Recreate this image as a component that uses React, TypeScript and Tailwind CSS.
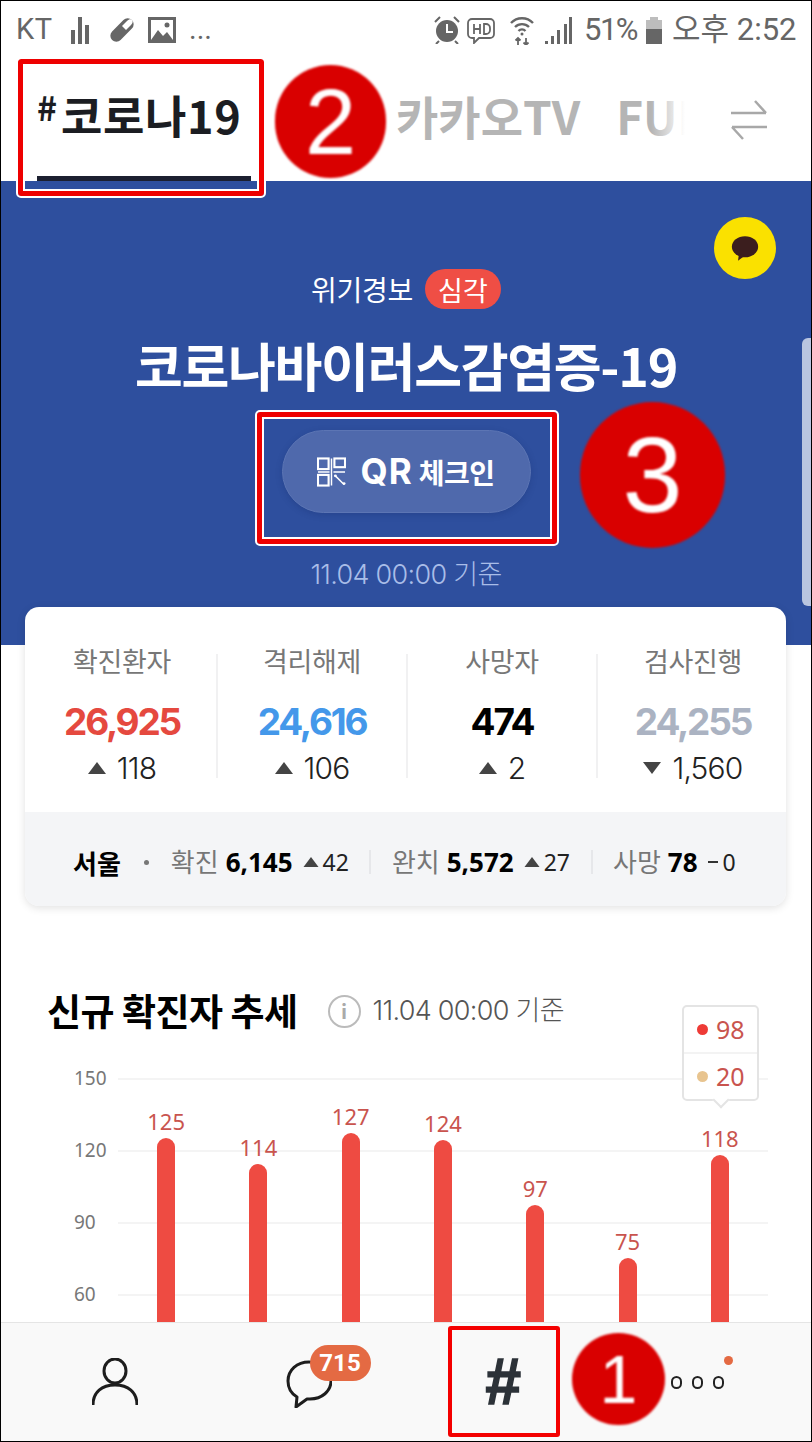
const stats = [
  { label: '확진환자', value: '26,925', color: 'text-[#e5493f]', delta: '118', up: true },
  { label: '격리해제', value: '24,616', color: 'text-[#4498ea]', delta: '106', up: true },
  { label: '사망자', value: '474', color: 'text-black', delta: '2', up: true },
  { label: '검사진행', value: '24,255', color: 'text-[#abb3c2]', delta: '1,560', up: false },
]

const bars = [125, 114, 127, 124, 97, 75, 118]

const axis = ['150', '120', '90', '60']

function Triangle({ up = true, small = false }: { up?: boolean; small?: boolean }) {
  return (
    <svg viewBox="0 0 18 12" className={small ? 'w-[16px] h-[10px]' : 'w-[18px] h-[12px]'}>
      <path d={up ? 'M9 0L18 12H0Z' : 'M9 12L18 0H0Z'} fill="#444" />
    </svg>
  )
}

function StatusBar() {
  return (
    <div className="h-[54px] shrink-0 flex items-center justify-between pl-[15px] pr-[14px] pt-[4px] text-[#666] font-['Roboto','Noto_Sans_CJK_KR',sans-serif] text-[31px]">
      <div className="flex items-center">
        <span className="w-[40px] tracking-[0.5px] text-[29px]">KT</span>
        <svg viewBox="0 0 20 27" className="ml-[15px] w-[20px] h-[27px]" fill="#666">
          <rect x="0" y="13" width="4" height="14" />
          <rect x="7" y="0" width="4" height="27" />
          <rect x="14" y="8" width="4" height="19" />
        </svg>
        <svg viewBox="0 0 28 28" className="ml-[17px] w-[28px] h-[28px]">
          <rect x="0" y="8" width="28" height="12" rx="6" transform="rotate(-45 14 14)" fill="#666" />
          <path d="M14 10l5-5c2-2 4-2 5-1s1 3-1 5l-5 5z" fill="#fff" />
        </svg>
        <svg viewBox="0 0 28 26" className="ml-[12px] w-[28px] h-[26px]">
          <path d="M0 0h28v26H0z" fill="#666" />
          <path d="M3 3h22v20H3z" fill="#fff" />
          <path d="M3 23l7-10 5 6 4-4 6 8z" fill="#666" />
          <circle cx="19" cy="8" r="2.5" fill="#666" />
        </svg>
        <span className="ml-[13px] w-[26px] text-[29px]">...</span>
      </div>
      <div className="flex items-center">
        <svg viewBox="0 0 26 28" className="w-[26px] h-[28px]">
          <circle cx="13" cy="15" r="11" fill="#666" />
          <path d="M13 8v8h6" stroke="#fff" strokeWidth="2" fill="none" />
          <path d="M1 6l5-5M25 6l-5-5M5 25l-3 3M21 25l3 3" stroke="#666" strokeWidth="2" />
        </svg>
        <svg viewBox="0 0 28 28" className="ml-[7px] w-[28px] h-[28px]">
          <path d="M5 3h18a4 4 0 014 4v11a4 4 0 01-4 4H12l-5 5v-5H5a4 4 0 01-4-4V7a4 4 0 014-4z" fill="none" stroke="#666" strokeWidth="1.8" />
          <path d="M7 8v10M13 8v10M7 13h6M17 8v10h2a4 4 0 004-4v-2a4 4 0 00-4-4z" fill="none" stroke="#666" strokeWidth="1.8" />
        </svg>
        <svg viewBox="0 0 24 30" className="ml-[15px] w-[24px] h-[30px]" fill="none" stroke="#666" strokeWidth="2.4">
          <path d="M1 8a15 15 0 0122 0M5 12a10 10 0 0114 0M8.500 16a5 5 0 017 0" />
          <circle cx="12" cy="19" r="1.500" fill="#666" stroke="none" />
          <path d="M8 30v-7M5.500 25.500L8 23l2.500 2.500M16 23v7M13.500 27.500L16 30l2.500-2.500" strokeWidth="1.800" />
        </svg>
        <svg viewBox="0 0 27 27" className="ml-[11px] w-[27px] h-[27px]" fill="#666">
          <path d="M0 27v-3h3v3zM6 27v-8h3v8zM12 27V13h3v14zM19 27V7h3v20zM24 27V0h3v27z" />
        </svg>
        <span className="ml-[12px] w-[53px] tracking-[-1.5px] whitespace-nowrap">51%</span>
        <svg viewBox="0 0 16 27" className="ml-[9px] w-[16px] h-[27px]">
          <path d="M4 0h8v3h4v24H0V3h4z" fill="#bdbdbd" />
          <rect x="0" y="12" width="16" height="15" fill="#666" />
        </svg>
        <span className="ml-[10px] w-[125px] whitespace-nowrap">오후 2:52</span>
      </div>
    </div>
  )
}

function Tabs() {
  return (
    <div className="relative h-[126px] shrink-0 flex items-center font-['Noto_Sans_CJK_KR',sans-serif] font-bold">
      <div className="relative ml-[36px] w-[214px] h-full flex items-center text-[#1b1d22]">
        <span className="text-[34px] -mt-[24px]">#</span>
        <span className="text-[45px] ml-[4px] tracking-[0.6px] -mt-[6px]">코로나19</span>
        <div className="absolute left-0 right-0 bottom-0 h-[5px] bg-[#1c2030]" />
      </div>
      <span className="ml-[145px] text-[46px] text-[#b5b5b5] whitespace-nowrap -mt-[6px]">카카오TV</span>
      <span className="ml-[36px] text-[46px] text-[#b5b5b5] whitespace-nowrap -mt-[6px]">FUN</span>
      <div className="absolute left-[650px] top-0 w-[160px] h-full bg-[linear-gradient(to_right,transparent,#fff_34px)]" />
      <svg viewBox="0 0 38 40" className="absolute left-[729px] top-[45px] w-[38px] h-[40px]" fill="none" stroke="#a8a8a8" strokeWidth="2.500">
        <path d="M1 13h35M25 1l11 12M37 27H2M13 39L2 27" />
      </svg>
    </div>
  )
}

function Hero() {
  return (
    <div className="relative h-[464px] shrink-0 bg-[#2e4f9e] flex flex-col items-center text-white font-['Noto_Sans_CJK_KR',sans-serif]">
      <div className="absolute left-[713px] top-[36px] w-[62px] h-[62px] rounded-full bg-[#fae100] flex items-center justify-center">
        <svg viewBox="0 0 32 28" className="w-[28px] h-[25px]">
          <ellipse cx="16" cy="12" rx="15" ry="12" fill="#3b1e1e" />
          <path d="M9 20l-1 8 8-6z" fill="#3b1e1e" />
        </svg>
      </div>
      <div className="absolute right-0 top-[157px] w-[9px] h-[268px] rounded-l-[6px] bg-[#b9c5e0]" />
      <div className="mt-[88px] h-[40px] flex items-center">
        <span className="text-[28px] leading-none tracking-[-0.3px]">위기경보</span>
        <span className="ml-[12px] w-[76px] h-[40px] rounded-full bg-[#ef4e45] flex items-center justify-center text-[27px] leading-none">심각</span>
      </div>
      <h1 className="mt-[23px] h-[66px] leading-[66px] text-[52px] font-bold tracking-[-1.3px] whitespace-nowrap">코로나바이러스감염증-19</h1>
      <button className="mt-[32px] w-[249px] h-[83px] rounded-full bg-[#4f69ac] border border-[#5c75b4] flex items-center justify-center shadow-[0_2px_6px_rgba(20,40,100,0.25)]">
        <svg viewBox="0 0 30 30" className="-ml-[1px] w-[29px] h-[30px]" fill="none" stroke="#fff" strokeWidth="2.200">
          <rect x="1" y="1" width="11" height="11" />
          <rect x="18" y="1" width="11" height="9" />
          <rect x="1" y="18" width="11" height="11" />
          <path d="M15 1v28M1 15h12M17 15h12M19 19l9 9" strokeWidth="1.500" />
          <circle cx="19" cy="19" r="1.500" fill="#fff" stroke="none" />
          <circle cx="28" cy="27" r="1.500" fill="#fff" stroke="none" />
        </svg>
        <span className="ml-[15px] text-[35px] font-bold font-['Inter',sans-serif] tracking-[1px]">QR</span>
        <span className="ml-[6px] text-[28px] font-bold tracking-[-0.5px]">체크인</span>
      </button>
      <div className="mt-[48px] text-[27px] leading-none text-[#a9bde8] tracking-[-0.7px] font-['Inter','Noto_Sans_CJK_KR',sans-serif] font-light">11.04 00:00 기준</div>
    </div>
  )
}

function StatCard() {
  return (
    <div className="relative -mt-[38px] ml-[24px] w-[761px] h-[299px] shrink-0 rounded-[14px] bg-white shadow-[0_2px_8px_rgba(0,0,0,0.12)] overflow-hidden font-['Inter','Noto_Sans_CJK_KR',sans-serif]">
      <div className="h-[205px] grid grid-cols-[repeat(4,190px)] pl-[3px] pt-[47px]">
        {stats.map((s, i) => (
          <div key={s.label} className={`h-[124px] flex flex-col items-center ${i < 3 ? 'border-r-2 border-[#f1f1f2]' : ''}`}>
            <div className="h-[20px] flex items-center -mt-[1px] text-[27px] text-[#777] tracking-[-0.4px] whitespace-nowrap">{s.label}</div>
            <div className={`mt-[27px] h-[44px] flex items-center text-[37px] font-bold tracking-[-2.2px] ${s.color}`}>{s.value}</div>
            <div className="mt-[3px] h-[42px] flex items-center text-[30px] font-light text-[#222] tracking-[-0.8px]">
              <Triangle up={s.up} />
              <span className="ml-[11px]">{s.delta}</span>
            </div>
          </div>
        ))}
      </div>
      <div className="h-[94px] bg-[#f4f5f7] flex items-center pl-[48px] pt-[6px] text-[26px] whitespace-nowrap font-['Noto_Sans','Noto_Sans_CJK_KR',sans-serif]">
        <span className="font-bold text-black font-['Noto_Sans_CJK_KR',sans-serif]">서울</span>
        <span className="ml-[23px] w-[5px] h-[5px] rounded-full bg-[#777]" />
        <span className="ml-[22px] text-[#777]">확진</span>
        <span className="ml-[7px] font-bold text-black">6,145</span>
        <span className="ml-[10px]"><Triangle small /></span>
        <span className="ml-[4px] text-[23px] text-[#222]">42</span>
        <span className="ml-[20px] w-[2px] h-[24px] bg-[#e6e7ea]" />
        <span className="ml-[21px] text-[#777]">완치</span>
        <span className="ml-[7px] font-bold text-black">5,572</span>
        <span className="ml-[10px]"><Triangle small /></span>
        <span className="ml-[4px] text-[23px] text-[#222]">27</span>
        <span className="ml-[21px] w-[2px] h-[24px] bg-[#e6e7ea]" />
        <span className="ml-[20px] text-[#777]">사망</span>
        <span className="ml-[7px] font-bold text-black">78</span>
        <span className="ml-[10px] w-[10px] h-[2px] bg-[#333]" />
        <span className="ml-[5px] text-[23px] text-[#222]">0</span>
      </div>
    </div>
  )
}

function Chart() {
  return (
    <div className="mt-[78px] pl-[46px] font-['Noto_Sans_CJK_KR',sans-serif]">
      <div className="h-[54px] flex items-center">
        <h2 className="text-[37px] font-bold text-black tracking-[-0.5px] whitespace-nowrap">신규 확진자 추세</h2>
        <span className="ml-[30px] w-[33px] h-[33px] rounded-full border-2 border-[#bbb] flex items-center justify-center text-[20px] font-bold text-[#aaa] leading-none">i</span>
        <span className="ml-[12px] text-[27px] text-[#555] tracking-[-0.7px] font-['Inter','Noto_Sans_CJK_KR',sans-serif] font-light">11.04 00:00 기준</span>
      </div>
      <div className="relative mt-[40px] ml-[27px] h-[360px] w-[694px]">
        <div className="absolute inset-0 flex flex-col">
          {axis.map((a) => (
            <div key={a} className="h-[72px] flex items-start">
              <span className="w-[44px] -mt-[15px] text-[19px] leading-[30px] text-[#777] font-['Noto_Sans',sans-serif]">{a}</span>
              <span className="flex-1 h-[2px] bg-[#f4f4f4]" />
            </div>
          ))}
        </div>
        <div className="absolute left-[44px] right-[2px] bottom-0 pl-[2px] grid grid-cols-7 items-end">
          {bars.map((b) => (
            <div key={b} className="flex flex-col items-center">
              <span className="h-[33px] leading-[32px] text-[22px] text-[#c9544e] font-['Noto_Sans',sans-serif]">{b}</span>
              <div className="w-[18px] rounded-t-[9px] bg-[#ee4b42]" style={{ height: b * 2.4 }} />
            </div>
          ))}
        </div>
        <div className="absolute left-[608px] -top-[73px] w-[77px] h-[96px] rounded-[5px] border-2 border-[#e4e4e4] bg-white flex flex-col text-[25px] text-[#c9544e] font-['Noto_Sans',sans-serif]">
          <div className="h-[47px] flex items-center border-b-2 border-[#f3f3f3] pl-[13px]">
            <span className="w-[11px] h-[11px] rounded-full bg-[#ee3b36]" />
            <span className="ml-[8px]">98</span>
          </div>
          <div className="flex-1 flex items-center pl-[13px]">
            <span className="w-[11px] h-[11px] rounded-full bg-[#e8c48f]" />
            <span className="ml-[8px]">20</span>
          </div>
          <span className="absolute left-[31px] -bottom-[7px] w-[12px] h-[12px] rotate-45 bg-white border-r-2 border-b-2 border-[#e4e4e4]" />
        </div>
      </div>
    </div>
  )
}

function BottomNav() {
  return (
    <div className="relative h-[119px] shrink-0 bg-[#f9f9f9] border-t border-[#e5e5e5] grid grid-cols-4">
      <div className="flex items-center justify-center pl-[25px]">
        <svg viewBox="0 0 46 48" className="w-[46px] h-[48px]" fill="none" stroke="#1d1d1d" strokeWidth="3">
          <ellipse cx="23" cy="13" rx="11" ry="12" />
          <path d="M1 47c0-13 9-20 22-20s22 7 22 20" />
        </svg>
      </div>
      <div className="relative flex items-center justify-center pl-[8px]">
        <svg viewBox="0 0 46 48" className="mt-[3px] w-[46px] h-[48px]" fill="none" stroke="#1d1d1d" strokeWidth="3">
          <path d="M23 2C11 2 2 10 2 21c0 7 4 13 9 16l-1 10 11-8h3c12 0 21-8 21-18S35 2 23 2z" strokeLinejoin="round" />
        </svg>
        <span className="absolute left-[106px] top-[22px] w-[61px] h-[36px] rounded-[18px] bg-[#e46a43] flex items-center justify-center text-[24px] font-bold text-white font-['Roboto',sans-serif]">715</span>
      </div>
      <div className="flex items-center justify-center pr-[10px]">
        <span className="text-[64px] leading-none font-bold italic text-[#2c3238] [-webkit-text-stroke:1.5px_#2c3238] font-['Liberation_Sans',sans-serif]">#</span>
      </div>
      <div className="relative">
        <div className="absolute left-[62px] top-[53px] flex gap-[10px]">
          <span className="w-[11px] h-[13px] rounded-full border-[2.5px] border-[#222]" />
          <span className="w-[11px] h-[13px] rounded-full border-[2.5px] border-[#222]" />
          <span className="w-[11px] h-[13px] rounded-full border-[2.5px] border-[#222]" />
        </div>
        <span className="absolute left-[115px] top-[33px] w-[9px] h-[9px] rounded-full bg-[#e46a43]" />
      </div>
    </div>
  )
}

// red callouts drawn over the capture
function Callout({ className }: { className: string }) {
  return <div className={`absolute rounded-[3px] border-[5px] border-[#ee0000] outline-[2px] outline-white shadow-[inset_0_0_0_2px_#fff] ${className}`} />
}

function Badge({ n, className }: { n: string; className: string }) {
  return (
    <div className={`absolute rounded-full bg-[#d90000] blur-[0.8px] flex items-center justify-center text-white font-['Liberation_Sans',sans-serif] ${className}`}>
      {n}
    </div>
  )
}

export default function App() {
  return (
    <div className="relative w-[812px] h-[1442px] overflow-hidden bg-white border border-black flex flex-col">
      <StatusBar />
      <Tabs />
      <div className="flex-1 min-h-0 overflow-hidden">
        <Hero />
        <StatCard />
        <Chart />
      </div>
      <BottomNav />

      <Callout className="left-[17px] top-[58px] w-[246px] h-[137px]" />
      <Callout className="left-[256px] top-[411px] w-[300px] h-[132px]" />
      <div className="absolute left-[447px] top-[1325px] w-[112px] h-[111px] rounded-[3px] border-[4px] border-[#f40000]" />

      <Badge n="2" className="left-[274px] top-[64px] w-[111px] h-[113px] text-[92px]" />
      <Badge n="3" className="left-[579px] top-[401px] w-[145px] h-[146px] text-[108px]" />
      <Badge n="1" className="left-[571px] top-[1332px] w-[93px] h-[92px] text-[68px]" />
    </div>
  )
}
